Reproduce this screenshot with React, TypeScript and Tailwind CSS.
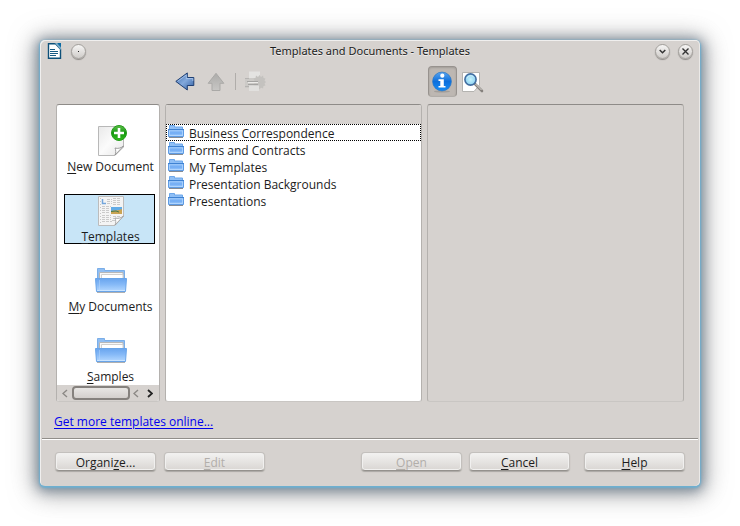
import React, { useState } from "react";

function Gradients() {
  return (
    <svg width="0" height="0" className="absolute" aria-hidden="true">
      <defs>
        <linearGradient id="folderFront" x1="0" y1="0" x2="0" y2="1">
          <stop offset="0" stopColor="#69a5ee" />
          <stop offset="0.45" stopColor="#85b9f7" />
          <stop offset="1" stopColor="#b4d8ff" />
        </linearGradient>
        <linearGradient id="folderSmall" x1="0" y1="0" x2="0" y2="1">
          <stop offset="0" stopColor="#a9d0fb" />
          <stop offset="0.5" stopColor="#6eaaf4" />
          <stop offset="1" stopColor="#aad1fc" />
        </linearGradient>
        <linearGradient id="paper" x1="0" y1="0" x2="1" y2="1">
          <stop offset="0" stopColor="#e9e9e9" />
          <stop offset="0.5" stopColor="#fbfbfb" />
          <stop offset="1" stopColor="#e6e6e6" />
        </linearGradient>
        <linearGradient id="blueArrow" x1="0" y1="0" x2="1" y2="1">
          <stop offset="0" stopColor="#3c6cae" />
          <stop offset="0.5" stopColor="#83a9dc" />
          <stop offset="1" stopColor="#2e5ca0" />
        </linearGradient>
        <linearGradient id="greyArrow" x1="0" y1="0" x2="0" y2="1">
          <stop offset="0" stopColor="#acaba9" />
          <stop offset="1" stopColor="#c8c7c5" />
        </linearGradient>
        <linearGradient id="info" x1="0" y1="0" x2="0" y2="1">
          <stop offset="0" stopColor="#5aa4ee" />
          <stop offset="0.5" stopColor="#0d6fdc" />
          <stop offset="1" stopColor="#168cf6" />
        </linearGradient>
        <linearGradient id="plus" x1="0" y1="0" x2="0" y2="1">
          <stop offset="0" stopColor="#5fc04c" />
          <stop offset="0.5" stopColor="#13980e" />
          <stop offset="1" stopColor="#35bd1f" />
        </linearGradient>
        <radialGradient id="lens">
          <stop offset="0" stopColor="#c6f3fd" />
          <stop offset="1" stopColor="#8bd0f0" />
        </radialGradient>
      </defs>
    </svg>
  );
}

function WriterIcon() {
  return (
    <svg width="16" height="16" viewBox="0 0 16 16" aria-hidden="true">
      <path d="M1.5.8H8.5L13.5 6V15.3H1.5Z" fill="#fff" stroke="#0e5079" strokeWidth="1.4" />
      <path d="M7.5 0 14 7V3.7L11.5 1Z" fill="#78abc9" />
      <path d="M10 0h4v4.5Z" fill="#0b6aa3" />
      <path d="M3 6.5h5M3 8.5h8M3 10.5h8M3 12.5h6" stroke="#195b84" />
    </svg>
  );
}

function BackIcon() {
  return (
    <svg width="20" height="19" viewBox="0 0 20 19" aria-hidden="true">
      <path d="M.8 9.4 12.3.9V5.5H18.8V13.5H12.3V18Z" fill="url(#blueArrow)" stroke="#1f3f73" strokeLinejoin="round" />
      <path d="M2.5 9.4 11.3 3V6.5H17.8V9" fill="none" stroke="#b3cdf0" strokeOpacity=".7" />
    </svg>
  );
}

function UpIcon() {
  return (
    <svg width="18" height="20" viewBox="0 0 18 20" aria-hidden="true">
      <path d="M9 1.3 16.8 11.3H13V18.5H5V11.3H1.2Z" fill="url(#greyArrow)" stroke="#aaa9a7" strokeLinejoin="round" />
    </svg>
  );
}

function PrinterIcon() {
  return (
    <svg width="22" height="21" viewBox="0 0 22 21" aria-hidden="true">
      <path d="M5 .5H16V7H5Z" fill="#e4e3e1" />
      <path d="M1 7H18V17H1Z" fill="#cccac7" />
      <path d="M1 7.5h4M1 15.5h5" stroke="#b6b4b2" />
      <path
        d="m15.500 4 1.500 2 2-1.500.5 2.500 2 .5-1 2 1.500 1.500-1.500 1.500 1 2-2 .5-.5 2.500-2-1-1.500 2-1.500-2-2 1-.5-2.500-2-.5 1-2-1.500-1.500 1.500-1.500-1-2 2-.5.5-2.500 2 1.500Z"
        fill="#c4c2bf"
      />
      <path d="M5 14.500H15V20H5Z" fill="#e1e0de" />
      <path d="M4 13.500H14" stroke="#a5a4a2" />
      <path d="M3 10.500H14" stroke="#a5a4a2" />
      <path d="M4 11.500H14" stroke="#edecea" />
    </svg>
  );
}

function InfoIcon() {
  return (
    <svg width="22" height="22" viewBox="0 0 22 22" aria-hidden="true">
      <ellipse cx="10" cy="20.5" rx="8" ry="1" fill="#918d89" opacity=".6" />
      <circle cx="10" cy="10.5" r="9.4" fill="url(#info)" stroke="#2876c4" strokeWidth=".7" />
      <circle cx="10.3" cy="4.7" r="2.1" fill="#fff" />
      <path d="M6.5 8.3H11.8V15H13.5V16.6H6.5V15H8.3V9.9H6.5Z" fill="#fff" />
    </svg>
  );
}

function PreviewIcon() {
  return (
    <svg width="22" height="22" viewBox="0 0 22 22" aria-hidden="true">
      <path d="M.5 1.5H17.5V14L12 20.500H.5Z" fill="#fff" stroke="#b4b3b0" />
      <path d="m13 13 7 7" stroke="#85817d" strokeWidth="2.600" strokeLinecap="round" />
      <path d="m13.5 13 6 6" stroke="#ddd9d5" strokeWidth="1" />
      <circle cx="8.5" cy="8.5" r="5.6" fill="url(#lens)" stroke="#416da0" strokeWidth="1.6" />
      <path d="M5 7.500c1-3 5-4 7-1" fill="none" stroke="#fff" strokeOpacity=".5" />
    </svg>
  );
}

function NewDocumentIcon() {
  return (
    <svg className="shrink-0" width="32" height="32" viewBox="0 0 32 32" aria-hidden="true">
      <path d="M3.5 1.5H28.5V22L20 30.5H3.5Z" fill="url(#paper)" stroke="#b8b8b8" />
      <path d="M20 30c1-2 1-5 0-7 3 1 6 0 8.500-2Z" fill="#fff" stroke="#888" strokeWidth=".8" />
      <circle cx="24" cy="8" r="7.500" fill="url(#plus)" stroke="#239b19" />
      <path d="M24 3v10M19 8h10" stroke="#fff" strokeWidth="2.600" />
    </svg>
  );
}

function TemplateIcon() {
  return (
    <svg className="shrink-0" width="32" height="32" viewBox="0 0 32 32" aria-hidden="true">
      <path d="M3.500 1.500H28.500V21L20 30.500H3.500Z" fill="#f4f4f4" stroke="#bcbcbc" />
      <path d="M5.500 3v26" stroke="#c6c6c6" strokeDasharray="1 2" />
      <path d="M7.500 4v4.500H11" fill="none" stroke="#74a6dc" strokeWidth="1.500" />
      <path
        d="M12 4.500h5M18 3.500h8M12 6.500h5M18 5.500h8M12 8.500h5M18 7.500h7M7 11.500h9M18 9.500h8M7 13.500h8M7 15.500h8M7 17.500h8M7 20.500h9M18 21.500h8M7 22.500h9M18 23.500h6M7 24.500h9M17 25.500h4M7 26.500h10"
        stroke="#cacaca"
        strokeDasharray="3 1"
      />
      <path d="M16 12H27V19H16Z" fill="#61abe6" />
      <path d="M16 16c3-1 7 0 11-2v5H16Z" fill="#caa453" />
      <path d="M16 16.500 21 16l3 1" fill="none" stroke="#4b7a49" />
      <path d="M20 30c1-2 1-5 0-7 3 1 6 0 8.500-2Z" fill="#fff" stroke="#999" strokeWidth=".8" />
    </svg>
  );
}

function LargeFolderIcon() {
  return (
    <svg className="shrink-0" width="32" height="32" viewBox="0 0 32 32" aria-hidden="true">
      <path d="M2 27h28v1H2Z" fill="#8e8e8e" opacity=".7" />
      <path d="M2.500 15V3.500H9.500V5.500H29.500V15Z" fill="#8fbdf2" stroke="#7aaee8" />
      <path d="M4.500 7.500H28V19H4.500Z" fill="#f7f7f7" stroke="#b7b7b7" />
      <path d="M6.500 9.500H28V19H6.500Z" fill="#fff" stroke="#d0d0d0" />
      <path d="M5 13.500C11 12 16 15 28 13.500V17H5Z" fill="#e3e3e3" />
      <path d="M.5 13.500H31.500L30.500 26.500H1.500Z" fill="url(#folderFront)" stroke="#68a4e9" />
      <path d="M2 25.500H30" stroke="#cae4ff" />
      <path d="M4.500 15v11" stroke="#b7d8fb" strokeOpacity=".5" />
    </svg>
  );
}

function SmallFolderIcon() {
  return (
    <svg className="shrink-0" width="16" height="15" viewBox="0 0 16 15" aria-hidden="true">
      <path d="M1 12h14v1H1Z" fill="#858b94" />
      <path d="M1.500 6V.5H6.500V2H14.500V6Z" fill="#8fbff6" stroke="#6ca7ea" />
      <path d="M.5 4.500H15.500V11.500H.5Z" fill="url(#folderSmall)" stroke="#5e9be4" />
      <path d="M0 4.500H16" stroke="#3f82d2" />
      <path d="M1.500 6V10.500H14.500V6" fill="none" stroke="#b9dbff" strokeOpacity=".7" />
    </svg>
  );
}

function Chevron({ flip = false, dark = false }: { flip?: boolean; dark?: boolean }) {
  return (
    <svg width="6" height="9" viewBox="0 0 6 9" aria-hidden="true">
      <path
        d={flip ? "M1 1 5 4.500 1 8" : "M5 1 1 4.500 5 8"}
        fill="none"
        stroke={dark ? "#222" : "#8c8986"}
        strokeWidth={dark ? 1.8 : 1.4}
      />
    </svg>
  );
}

function TitleButton({ label, children }: { label: string; children: React.ReactNode }) {
  return (
    <button
      type="button"
      aria-label={label}
      className="flex size-[15px] items-center justify-center rounded-full border border-[#a3a09c] bg-gradient-to-b from-[#f6f5f4] to-[#cfccc9] shadow-[0_1px_1px_#8d8a87]"
    >
      {children}
    </button>
  );
}

/* The underlined letter is the keyboard mnemonic. */
function Mnemonic({ text, at = 0 }: { text: string; at?: number }) {
  return (
    <span>
      {text.slice(0, at)}
      <span className="underline underline-offset-2">{text[at]}</span>
      {text.slice(at + 1)}
    </span>
  );
}

function PushButton({ text, at, disabled, className = "" }: { text: string; at?: number; disabled?: boolean; className?: string }) {
  return (
    <button
      type="button"
      disabled={disabled}
      className={`flex h-[19px] w-[101px] items-center justify-center rounded border border-[#c3c0bd] border-b-[#94918d] bg-gradient-to-b from-[#f3f2f1] to-[#d9d6d3] pt-0.5 shadow-[inset_0_0_0_1px_#f1f0ef,0_1px_1px_#aaa7a3] disabled:text-[#b2aeaa] ${className}`}
    >
      <Mnemonic text={text} at={at} />
    </button>
  );
}

const categories = [
  { name: "New Document", Icon: NewDocumentIcon },
  { name: "Templates", Icon: TemplateIcon },
  { name: "My Documents", Icon: LargeFolderIcon },
  { name: "Samples", Icon: LargeFolderIcon },
];

const folders = [
  "Business Correspondence",
  "Forms and Contracts",
  "My Templates",
  "Presentation Backgrounds",
  "Presentations",
];

const panel = "rounded-[3px] border border-[#b4b1ae] border-t-[#8e8b88] border-b-[#c9c6c3] overflow-hidden";

export default function App() {
  const [category, setCategory] = useState("Templates");
  const [folder, setFolder] = useState("Business Correspondence");

  return (
    <div className="bg-white p-10 font-['Open_Sans',sans-serif] text-[12px] leading-4 text-[#1c1c1c]">
      <Gradients />
      <main className="rounded-[5px] bg-[#d6d2cf] shadow-[inset_1px_1px_0_#f0efee,inset_-1px_0_0_#ebe9e7,0_1px_2px_1px_#6cb0d2,0_2px_12px_3px_#4d647b99,0_3px_24px_6px_#77777799]">
        <header className="grid h-[22px] grid-cols-[1fr_auto_1fr] items-center px-[7px]">
          <div className="flex items-center gap-2">
            <WriterIcon />
            <TitleButton label="Window menu">
              <span className="size-px bg-[#222]" />
            </TitleButton>
          </div>
          <h1 className="font-['Noto_Sans',sans-serif] text-[11px] [text-shadow:0_1px_0_#efedeb]">
            Templates and Documents - Templates
          </h1>
          <div className="flex items-center justify-end gap-2">
            <TitleButton label="Minimize">
              <svg width="7" height="5" viewBox="0 0 7 5" aria-hidden="true">
                <path d="m.7 1 2.800 2.700L6.300 1" fill="none" stroke="#333" strokeWidth="1.500" />
              </svg>
            </TitleButton>
            <TitleButton label="Close">
              <svg width="7" height="7" viewBox="0 0 7 7" aria-hidden="true">
                <path d="m.5.5 6 6m0-6-6 6" stroke="#333" strokeWidth="1.400" />
              </svg>
            </TitleButton>
          </div>
        </header>

        <div className="grid grid-cols-[104px_1fr_1fr] gap-x-[5px] px-4 pt-1">
          <div className="col-start-2 flex h-[31px] items-center pl-2.5">
            <button type="button" aria-label="Back"><BackIcon /></button>
            <button type="button" aria-label="Up one level" disabled className="ml-3"><UpIcon /></button>
            <span className="ml-2.5 h-[17px] w-px bg-[#b0adaa]" />
            <button type="button" aria-label="Print" disabled className="ml-2"><PrinterIcon /></button>
          </div>
          <div className="flex h-[31px] items-center gap-[5px] pl-px">
            <button
              type="button"
              aria-label="Document properties"
              aria-pressed="true"
              className="flex h-[31px] w-[29px] items-center justify-center rounded border border-[#97928e] border-b-[#b1ada9] bg-[#bdb7b2] shadow-[inset_0_1px_2px_#a19c97]"
            >
              <InfoIcon />
            </button>
            <button type="button" aria-label="Preview"><PreviewIcon /></button>
          </div>
        </div>

        <div className="grid grid-cols-[104px_1fr_1fr] gap-x-[5px] px-4 pt-[7px]">
          <nav className={`${panel} flex flex-col bg-white`} aria-label="Categories">
            <div className="flex grow flex-col gap-5 pt-[19px] pr-1 pl-[7px]">
              {categories.map(({ name, Icon }) => (
                <button
                  key={name}
                  type="button"
                  onClick={() => setCategory(name)}
                  className={`flex h-[50px] flex-col items-center gap-1 border pl-0.5 leading-3 whitespace-nowrap ${
                    category === name ? "border-black bg-[#c8e5f7]" : "border-transparent"
                  }`}
                >
                  <Icon />
                  <Mnemonic text={name} />
                </button>
              ))}
            </div>
            <div className="flex h-4 items-center bg-[#d6d2cf]">
              <button type="button" aria-label="Scroll left" className="ml-[5px]"><Chevron /></button>
              <span className="ml-1 h-3.5 w-[58px] rounded border-2 border-[#85817d] bg-gradient-to-b from-[#e8e6e4] to-[#d3cfcc]" />
              <button type="button" aria-label="Page left" className="ml-[3px]"><Chevron /></button>
              <button type="button" aria-label="Scroll right" className="ml-2"><Chevron flip dark /></button>
            </div>
          </nav>

          <section className={`${panel} h-[298px] bg-white`} aria-label="Folders">
            <div className="h-[19px] bg-[#d6d2cf]" />
            <ul>
              {folders.map((name) => (
                <li key={name}>
                  <button
                    type="button"
                    onClick={() => setFolder(name)}
                    className={`flex h-[17px] w-full items-center gap-[5px] border border-dotted pl-px text-left whitespace-nowrap ${
                      folder === name ? "border-black" : "border-transparent"
                    }`}
                  >
                    <SmallFolderIcon />
                    <span className="pt-0.5">{name}</span>
                  </button>
                </li>
              ))}
            </ul>
          </section>

          <section className={panel} aria-label="Details" />
        </div>

        <div className="px-3.5 pt-3 pb-2">
          <a href="#templates" className="text-[#0000ee] underline underline-offset-2">
            Get more templates online...
          </a>
        </div>

        <hr className="mx-0.5 border-t border-b border-t-[#918e8a] border-b-white" />

        <footer className="flex px-[15px] pt-3 pb-[15px]">
          <PushButton text="Organize..." at={6} />
          <PushButton text="Edit" disabled className="ml-2" />
          <PushButton text="Open" disabled className="ml-auto" />
          <PushButton text="Cancel" className="ml-[7px]" />
          <PushButton text="Help" className="ml-3.5" />
        </footer>
      </main>
    </div>
  );
}
